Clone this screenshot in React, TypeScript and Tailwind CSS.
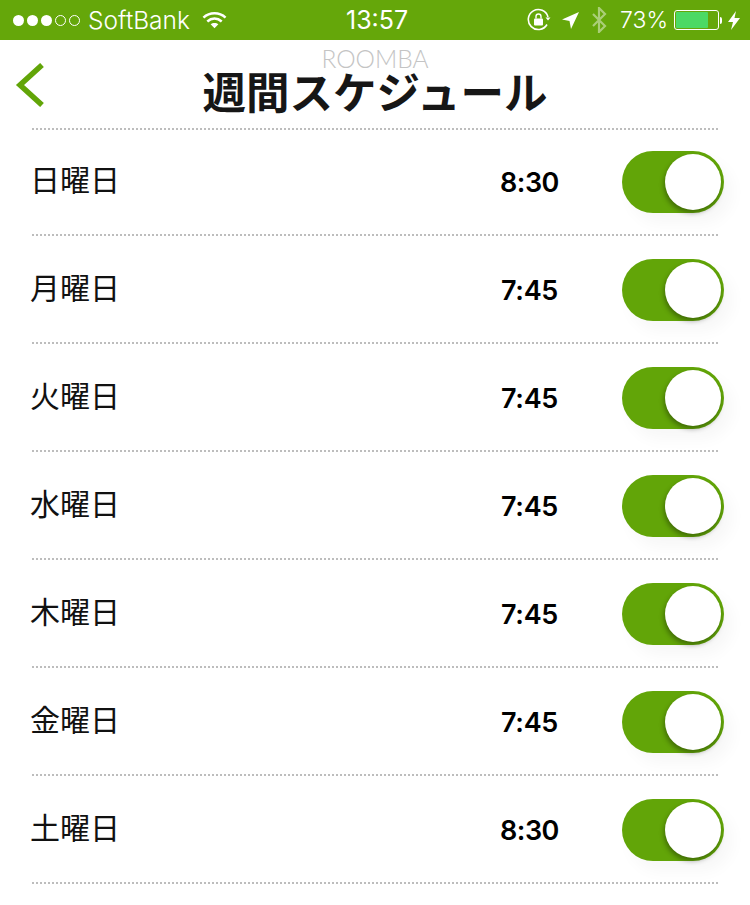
const rows = [
  { d: "日曜日", t: "8:30", h: "h-[104px]", c: "-ml-[1px] w-[122px] tracking-[-0.5px]" },
  { d: "月曜日", t: "7:45", h: "h-[106px] pt-[2px]", c: "w-[121px] tracking-[-0.3px]" },
  { d: "火曜日", t: "7:45", h: "h-[106px] pt-[2px]", c: "w-[121px] tracking-[-0.3px]" },
  { d: "水曜日", t: "7:45", h: "h-[106px] pt-[2px]", c: "w-[121px] tracking-[-0.3px]" },
  { d: "木曜日", t: "7:45", h: "h-[106px] pt-[2px]", c: "w-[121px] tracking-[-0.3px]" },
  { d: "金曜日", t: "7:45", h: "h-[106px] pt-[2px]", c: "w-[121px] tracking-[-0.3px]" },
  { d: "土曜日", t: "8:30", h: "h-[106px] pt-[2px]", c: "-ml-[1px] w-[122px] tracking-[-0.5px]" },
];

const Dots = () => (
  <div className="ml-8 mr-8 h-[2px] border-t-2 border-dotted border-[#bdbdbd]" />
);

function Toggle() {
  return (
    <div className="relative h-[62px] w-[102px] rounded-full bg-[#62a508] shadow-[8px_10px_16px_rgba(0,0,0,0.035)]">
      <div className="absolute left-[43px] top-[3px] h-[56px] w-[56px] rounded-full bg-white shadow-[-1px_3px_5px_rgba(0,0,0,0.35)]" />
    </div>
  );
}

export default function App() {
  return (
    <div className="h-[905px] w-[750px] overflow-hidden bg-white font-['Inter','Noto_Sans_CJK_JP',sans-serif]">
      <div className="flex h-10 items-center justify-between bg-[#65a70a] pl-[13px] pr-[10px] text-white">
        <div className="flex items-center">
          <div className="flex gap-[3px]">
            {[0, 1, 2].map((i) => (
              <span key={i} className="h-[11px] w-[11px] rounded-full bg-white" />
            ))}
            {[0, 1].map((i) => (
              <span key={i} className="h-[11px] w-[11px] rounded-full border border-white" />
            ))}
          </div>
          <span className="ml-[8px] text-[24.5px] font-light leading-none">SoftBank</span>
          <svg className="ml-[12px]" width="25" height="18" viewBox="0 0 26 18" fill="none" stroke="white" strokeWidth="2.6">
            <path d="M1.5 6.5C8 .5 18 .5 24.5 6.5" />
            <path d="M5.5 10.5C10 6.5 16 6.5 20.5 10.5" />
            <path d="M13 17.5l-4-4c2.2-2 5.8-2 8 0z" fill="white" stroke="none" />
          </svg>
        </div>
        <span className="absolute left-[346px] mt-[1px] text-[25px] font-normal leading-none">13:57</span>
        <div className="flex items-center">
          <svg width="24" height="24" viewBox="0 0 24 24" fill="none" stroke="white" strokeWidth="1.6">
            <path d="M20 16.5A10 10 0 1 1 21 9" />
            <path d="M18.5 9.5h5l-2.500 3z" fill="white" stroke="none" />
            <rect x="7" y="10.500" width="9" height="7" rx="1" fill="white" stroke="none" />
            <path d="M9 10.500V8.500a2.500 2.500 0 0 1 5 0v2" strokeWidth="1.400" />
          </svg>
          <svg className="ml-[10px]" width="19" height="19" viewBox="0 0 19 19" fill="white">
            <path d="M18 1 10 18 8.500 10 1 8.500z" />
          </svg>
          <svg className="ml-[11px]" width="16" height="26" viewBox="0 0 16 26" fill="none" stroke="white" strokeOpacity="0.45" strokeWidth="2.200">
            <path d="M2 7l12 12-6 6V1l6 6L2 19" />
          </svg>
          <span className="ml-[13px] text-[23px] font-light leading-none">73%</span>
          <div className="ml-[6px] h-[20px] w-[45px] rounded-[3px] border border-white p-[1px]">
            <div className="h-full w-[32px] rounded-[1px] bg-[#4cd964]" />
          </div>
          <div className="ml-[1px] h-[7px] w-[2px] rounded-r-sm bg-white" />
          <svg className="ml-[6px]" width="12" height="19" viewBox="0 0 12 19" fill="white">
            <path d="M8 0 0 11h5l-2 8 9-12H6.500z" />
          </svg>
        </div>
      </div>

      <div className="relative h-[88px]">
        <svg className="absolute left-[15px] top-[23px]" width="30" height="44" viewBox="0 0 30 44" fill="none" stroke="#62a508" strokeWidth="5.500">
          <path d="M27 2 5 22l22 20" />
        </svg>
        <div className="absolute left-0 right-0 top-[6px] text-center font-['Lato','Inter',sans-serif] text-[24.5px] font-light leading-[26px] text-[#c4c4c4]">ROOMBA</div>
        <div className="absolute left-0 right-0 top-[27px] text-center text-[43.5px] font-bold leading-[52px] text-[#161616]">週間スケジュール</div>
      </div>

      <Dots />
      {rows.map((r) => (
        <div key={r.d}>
          <div className={`flex items-center pl-8 pr-[26px] ${r.h}`}>
            <span className="-ml-[2px] mb-[4px] w-[471px] text-[30px] leading-none text-[#111]">{r.d}</span>
            <span className={`text-[27px] font-semibold leading-none text-black ${r.c}`}>{r.t}</span>
            <Toggle />
          </div>
          <Dots />
        </div>
      ))}
    </div>
  );
}
